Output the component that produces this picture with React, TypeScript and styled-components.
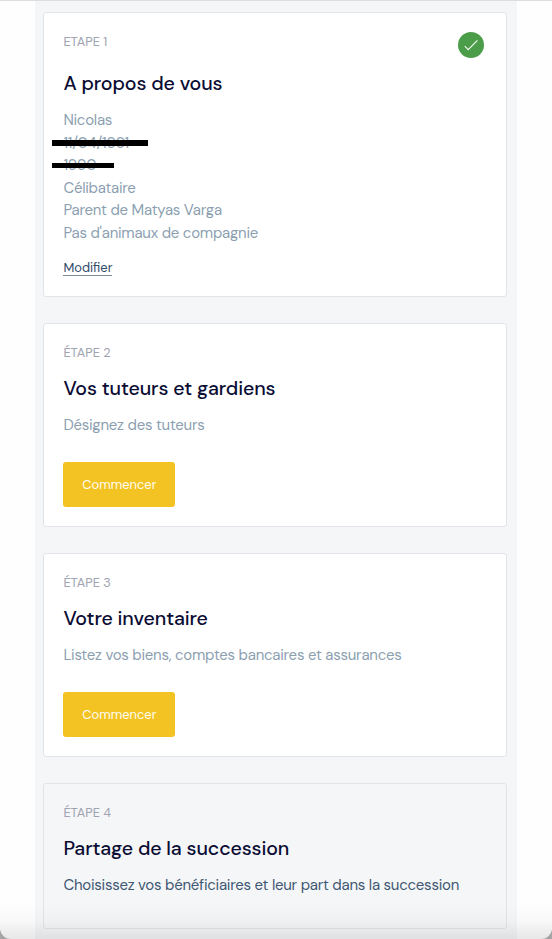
import React from 'react';
import styled, { createGlobalStyle } from 'styled-components';

const GlobalStyle = createGlobalStyle`
  *, *::before, *::after { box-sizing: border-box; }
  body {
    margin: 0;
    background: #a5a5a5;
    font-family: "DM Sans", Inter, sans-serif;
    overflow: hidden;
  }
  h2, p { margin: 0; font-weight: 400; }
`;

const Window = styled.div`
  position: relative;
  height: 939px;
  overflow: hidden;
  display: flex;
  justify-content: center;
  background: #fefefe;
  border-top: 1px solid #dcdde0;
  border-radius: 0 0 11px 11px;
`;

const BottomShade = styled.div`
  position: absolute;
  inset: auto 0 0;
  height: 36px;
  pointer-events: none;
  background: linear-gradient(rgba(0, 0, 0, 0), rgba(0, 0, 0, 0.025) 50%, rgba(0, 0, 0, 0.09));
`;

const Steps = styled.main`
  width: 482px;
  padding: 11px 9.6px 0 8.4px;
  display: flex;
  flex-direction: column;
  gap: 26px;
  background: #f5f6f8;
`;

const Card = styled.section<{ $height: number; $locked?: boolean }>`
  flex: none;
  height: ${(p) => p.$height}px;
  padding: 19px;
  display: flex;
  flex-direction: column;
  align-items: flex-start;
  border: 1px solid #e1e4e8;
  border-radius: 3px;
  background: ${(p) => (p.$locked ? '#f5f6f8' : '#fff')};
`;

const CardHeader = styled.div`
  width: 100%;
  display: flex;
  justify-content: space-between;
  align-items: flex-start;
  margin-bottom: 11px;
`;

const Label = styled.p`
  font-size: 12.8px;
  line-height: 20px;
  color: #a0a3b1;
`;

const Title = styled.h2`
  font-size: 19.6px;
  letter-spacing: -0.12px;
  line-height: 30px;
  font-weight: 500;
  color: #0a0c33;
`;

const Details = styled.div`
  margin-top: 10px;
`;

const Detail = styled.p<{ $dark?: boolean }>`
  position: relative;
  font-size: 15px;
  letter-spacing: -0.25px;
  line-height: 22.6px;
  white-space: nowrap;
  color: ${(p) => (p.$dark ? '#3f5873' : '#8c9fb1')};
`;

const Redaction = styled.span<{ $width: number; $height: number }>`
  position: absolute;
  left: -11.6px;
  top: ${(p) => 11 - p.$height / 2}px;
  width: ${(p) => p.$width}px;
  height: ${(p) => p.$height}px;
  background: #000;
`;

const EditLink = styled.a`
  margin-top: 15.5px;
  font-size: 12.9px;
  line-height: 15px;
  color: #2e4a69;
  border-bottom: 1px solid #7c8da0;
`;

const StartButton = styled.button`
  flex: none;
  width: 112px;
  height: 45px;
  margin-top: 25.4px;
  padding: 0;
  border: 0;
  border-radius: 3px;
  background: #f3c324;
  color: #fffdf2;
  font: 400 12.9px "DM Sans", Inter, sans-serif;
`;

const Badge = styled.svg`
  display: block;
  width: 26px;
  height: 26px;
  margin-right: 3px;
`;

const DoneBadge = () => (
  <Badge viewBox="0 0 26 26" aria-label="Terminé">
    <circle cx="13" cy="13" r="13" fill="#4c9d4a" />
    <path d="M6.8 14.2 L10.2 17.7 L19.4 8.3" fill="none" stroke="#f4fbf3" strokeWidth="1.1" />
  </Badge>
);

interface DetailLine {
  text: string;
  bar?: { width: number; height: number };
}

const profile: DetailLine[] = [
  { text: 'Nicolas' },
  { text: '11/04/1991', bar: { width: 96, height: 6 } },
  { text: '1990', bar: { width: 62.4, height: 5 } },
  { text: 'Célibataire' },
  { text: 'Parent de Matyas Varga' },
  { text: "Pas d'animaux de compagnie" },
];

interface StepProps {
  height: number;
  label: string;
  title: string;
  text: string;
  locked?: boolean;
}

const Step = ({ height, label, title, text, locked }: StepProps) => (
  <Card $height={height} $locked={locked}>
    <CardHeader>
      <Label>{label}</Label>
    </CardHeader>
    <Title>{title}</Title>
    <Details>
      <Detail $dark={locked}>{text}</Detail>
    </Details>
    {!locked && <StartButton type="button">Commencer</StartButton>}
  </Card>
);

export default function App() {
  return (
    <>
      <GlobalStyle />
      <Window>
        <Steps>
          <Card $height={285}>
            <CardHeader>
              <Label>ETAPE 1</Label>
              <DoneBadge />
            </CardHeader>
            <Title>A propos de vous</Title>
            <Details>
              {profile.map((line) => (
                <Detail key={line.text}>
                  {line.text}
                  {line.bar && <Redaction $width={line.bar.width} $height={line.bar.height} />}
                </Detail>
              ))}
            </Details>
            <EditLink>Modifier</EditLink>
          </Card>
          <Step height={204} label="ÉTAPE 2" title="Vos tuteurs et gardiens" text="Désignez des tuteurs" />
          <Step
            height={204}
            label="ÉTAPE 3"
            title="Votre inventaire"
            text="Listez vos biens, comptes bancaires et assurances"
          />
          <Step
            height={146}
            label="ÉTAPE 4"
            title="Partage de la succession"
            text="Choisissez vos bénéficiaires et leur part dans la succession"
            locked
          />
        </Steps>
        <BottomShade />
      </Window>
    </>
  );
}
